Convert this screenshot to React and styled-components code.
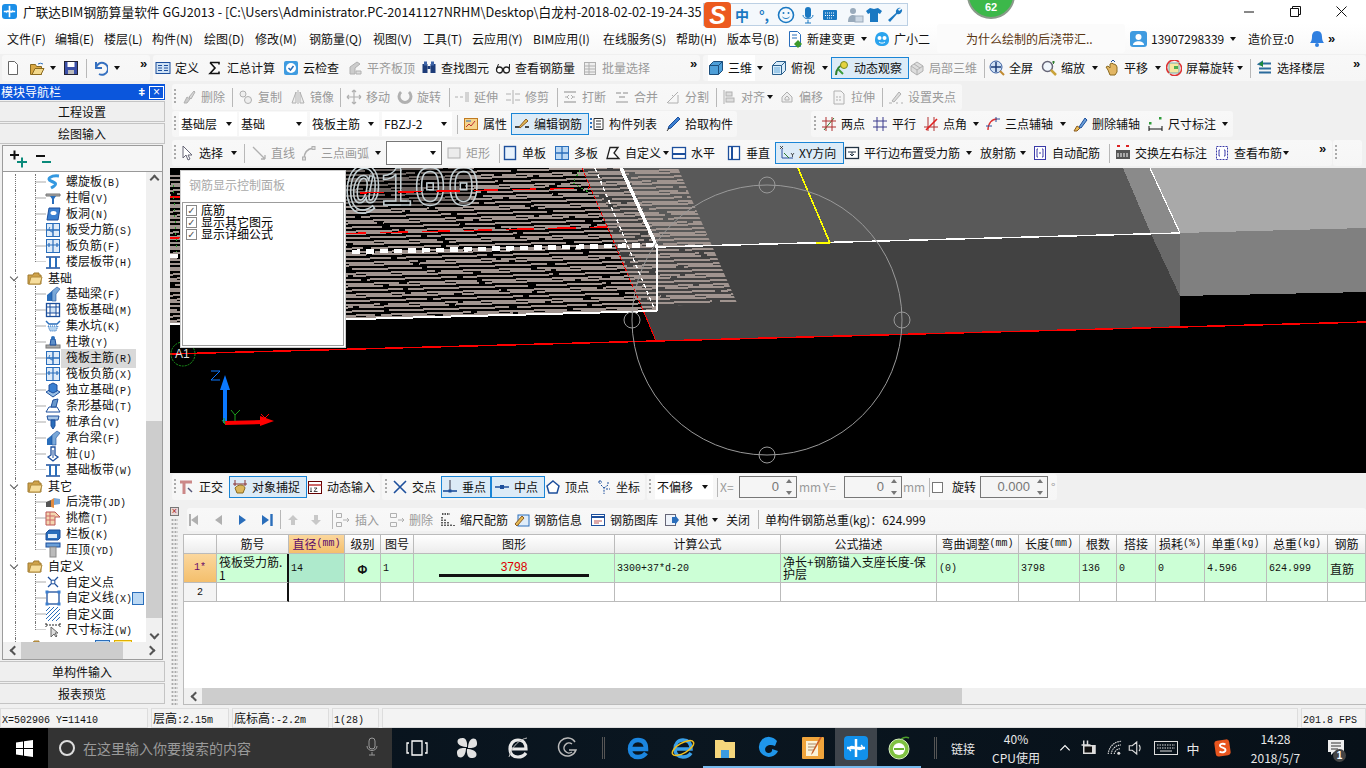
import React from 'react';
import styled, { createGlobalStyle, css } from 'styled-components';

const UI = `"Noto Sans CJK SC","Noto Sans",sans-serif`;
const Global = createGlobalStyle`
  html,body{margin:0;padding:0;width:1366px;height:768px;overflow:hidden;background:#f0f0f0}
  #root{width:1366px;height:768px}
  *{box-sizing:border-box}
`;

/* ---------- icons ---------- */
const B = '#2a6ebb', D = '#1d4f9c', GR = '#b0b0b0';
const tile = (inner) => <><rect x="1.5" y="1.5" width="13" height="13" fill="#dfecf9" stroke={B} />{inner}</>;
const ICONS = {
  new: <path d="M3.5 1.5h6l3 3v10h-9z" fill="#fff" stroke="#666" />,
  open: <><path d="M1.5 4.5h5l1 2h5v8h-11z" fill="#d9a844" stroke="#8a6a20" /><path d="M3 14.5l3-6h9l-3 6z" fill="#f3d98c" stroke="#8a6a20" /><path d="M9 4a4 3 0 0 1 5 0" fill="none" stroke={B} /></>,
  save: <><rect x="1.5" y="1.5" width="13" height="13" fill="#3a4fa8" stroke="#223" /><rect x="4.5" y="2" width="7" height="5" fill="#fff" /><rect x="5" y="10" width="6" height="4" fill="#bbb" /></>,
  undo: <path d="M4 2v6h6M4 8a6 6 0 1 1 3 6" fill="none" stroke="#3570c0" strokeWidth="2" />,
  define: <><rect x="1" y="2.5" width="14" height="11" fill="#cfe2f5" stroke={D} /><path d="M3 5.5h4M3 8h4M3 10.5h4M9 5.5h4M9 8h4M9 10.5h4" stroke={D} /></>,
  sigma: <path d="M3 2.5h9v2M12 13.5H3l5-5.5-5-5.5M3 13.5h9v-2" fill="none" stroke="#111" strokeWidth="1.6" />,
  cloud: <><rect x="1" y="1" width="14" height="14" rx="2" fill="#3e9be0" /><circle cx="8" cy="8" r="5" fill="#fff" /><path d="M5.5 8l2 2 3-4" fill="none" stroke="#2a6ebb" strokeWidth="1.5" /></>,
  flat: <><path d="M3 14V7l7-5 3 2-5 4v6z" fill="#ccc" stroke={GR} /><path d="M9 11h5v3H9z" fill="#ddd" stroke={GR} /></>,
  find: <><rect x="1.5" y="4" width="5" height="9" fill="#1d3c78" /><rect x="9.5" y="4" width="5" height="9" fill="#1d3c78" /><rect x="3" y="1.5" width="3" height="4" fill="#3d64a8" /><rect x="10" y="1.5" width="3" height="4" fill="#3d64a8" /><rect x="6.5" y="6" width="3" height="3" fill="#1d3c78" /></>,
  glasses: <><circle cx="4.5" cy="10" r="3" fill="#fff" stroke="#222" strokeWidth="1.3" /><circle cx="11.5" cy="10" r="3" fill="#fff" stroke="#222" strokeWidth="1.3" /><path d="M7.5 10h1M1.5 9l2-5M14.5 9V4" fill="none" stroke="#222" /></>,
  batch: <><rect x="2.5" y="2.5" width="11" height="12" fill="#eee" stroke={GR} /><path d="M2.5 6h11M2.5 9h11M2.5 12h11M7 2.5v12" stroke={GR} /></>,
  cube: <><path d="M1.5 5.5l4-4h9v9l-4 4h-9z" fill="#4e9fd8" stroke="#1d4f7c" /><path d="M1.5 5.5h9v9M10.5 5.5l4-4" fill="none" stroke="#1d4f7c" /></>,
  top: <><path d="M1.5 5.5l4-4h9v9l-4 4h-9z" fill="#d8ecfa" stroke="#2a5f8c" /><path d="M1.5 5.5h9v9M10.5 5.5l4-4" fill="none" stroke="#2a5f8c" /><rect x="3" y="7" width="6" height="6" fill="#9fcbea" /></>,
  orbit: <><path d="M2 15c0-6 4-10 9-11" fill="none" stroke="#2f7d2f" strokeWidth="2" /><circle cx="10" cy="5" r="3.5" fill="#e5d23f" stroke="#7a8a20" /><path d="M4 9l5 5" stroke="#3a9c3a" strokeWidth="2" /></>,
  local: <><path d="M2 6l6-4 6 4v5l-6 4-6-4z" fill="#ddd" stroke={GR} /><path d="M2 6l6 4 6-4M8 10v5M5 4l6 4" fill="none" stroke={GR} /></>,
  full: <><circle cx="7" cy="7" r="6" fill="#cfe0f4" stroke="#3a5fa0" /><path d="M7 2v10M2 7h10" stroke="#1d3c78" strokeWidth="1.5" /><path d="M11 11l4 4" stroke="#c08a30" strokeWidth="2" /></>,
  zoom: <><circle cx="6.5" cy="6.5" r="5" fill="#f0f6fc" stroke="#667" strokeWidth="1.5" /><path d="M10 10l5 5" stroke="#c9a23a" strokeWidth="2.5" /><path d="M11 2h3M12.5 1v3" stroke="#2f7d2f" /></>,
  pan: <><path d="M4 10l-2-3 2-1 2 2V4l2-1 1 1 1 0 2 1 1 2v5l-2 3H6z" fill="#e2b664" stroke="#8a6a20" /><path d="M9 0l2 2M9 0L7 2" stroke={D} /></>,
  rot: <><rect x="3" y="3" width="10" height="10" fill="#f7e7a0" stroke="#7aa" /><path d="M3 13a7 7 0 0 1 10-11" fill="none" stroke="#d33" strokeWidth="1.6" /><path d="M13 3a7 7 0 0 1-9 11" fill="none" stroke="#d33" strokeWidth="1.6" /><rect x="8" y="6" width="4" height="3" fill="#4caf50" /></>,
  floors: <><path d="M2 4l3-2v3zM5 3.5h9M2 8.5h12M2 12.5h12" stroke="#2a6b9c" strokeWidth="2" fill="#1d8a3a" /><path d="M2 4l4-3v6z" fill="#1d8a3a" /></>,
  del: <><path d="M3 14l3-6 3 2-3 4z" fill="#ccc" stroke={GR} /><path d="M8 8l5-6 1 1-4 7z" fill="#d8d8d8" stroke={GR} /></>,
  copy: <><circle cx="5" cy="5" r="3" fill="#eee" stroke={GR} /><circle cx="10" cy="11" r="3.5" fill="#eee" stroke={GR} /></>,
  mirror: <><path d="M2 14L6 3v11zM14 14L10 3v11z" fill="#eee" stroke={GR} /><path d="M8 1v14" stroke={GR} /></>,
  move: <path d="M8 1v14M1 8h14M8 1L6 3M8 1l2 2M8 15l-2-2M8 15l2-2M1 8l2-2M1 8l2 2M15 8l-2-2M15 8l-2 2" fill="none" stroke={GR} strokeWidth="1.2" />,
  rotate: <path d="M4 3a6 6 0 1 0 8 0" fill="none" stroke={GR} strokeWidth="3" />,
  extend: <path d="M1 8h3M6 8h3M12 3v10M14 3v10" fill="none" stroke={GR} />,
  trim: <path d="M1 5h5M1 11h5M10 5h5M10 11h5M8 1v14" fill="none" stroke={GR} />,
  brk: <><path d="M2 3h12M2 13h12" stroke={GR} strokeWidth="1.4" /><path d="M3 8h3M10 8h3M7 6l-2 2 2 2M9 6l2 2-2 2" fill="none" stroke={GR} /></>,
  merge: <><path d="M2 13h12" stroke={GR} strokeWidth="1.4" /><path d="M2 4h5M9 4h5M5 8h6" fill="none" stroke={GR} strokeWidth="1.4" /></>,
  split: <path d="M2 14l11-11M3 14h10V6M7 6l2 2" fill="none" stroke={GR} />,
  align: <><path d="M3 1v14" stroke={GR} /><rect x="5" y="3" width="6" height="4" fill="#ddd" stroke={GR} /><rect x="5" y="9" width="8" height="4" fill="#ddd" stroke={GR} /></>,
  offset: <path d="M3 13V8l5-5 5 5v5zM6 11V9l2-2 2 2v2z" fill="#eee" stroke={GR} />,
  stretch: <><path d="M3 2h7l3 3v10H3z" fill="#f4f4f4" stroke={GR} /><path d="M5 8h6M5 11h6" stroke={GR} strokeDasharray="2 1" /></>,
  grips: <><path d="M4 12l7-9 2 2-7 8z" fill="#ddd" stroke={GR} /><path d="M1 14h3M8 14h2M13 14h2" stroke={GR} /></>,
  prop: <><rect x="1.5" y="2.5" width="13" height="11" fill="#f6d48c" stroke="#c07a20" /><path d="M3 11l3-3 2 2 4-5" fill="none" stroke="#b33" /><path d="M3 5h5" stroke="#2a6ebb" /></>,
  edit: <><path d="M1 11h5M11 11h4" stroke="#111" strokeWidth="1.4" /><path d="M5 11l7-8 2 2-8 7z" fill="#e7bb55" stroke="#8a5a20" /></>,
  list: <><path d="M5 2.5h9v11H5z" fill="#fff" stroke="#333" /><path d="M7 5h5M7 8h5M7 11h5" stroke="#333" /><path d="M1 3h2M1 7h2M1 11h2" stroke={B} strokeWidth="2" /></>,
  pick: <><path d="M13 1l2 2-9 9-3 1 1-3z" fill="#3a7fd0" stroke={D} /><path d="M2 15l2-3" stroke="#333" /></>,
  twopt: <><path d="M3 14L13 2" stroke="#2f7d2f" /><path d="M1 5h14M1 11h14" stroke="#b03030" /><path d="M5 1v14M11 1v14" stroke="#b03030" /></>,
  par: <path d="M1 5h14M1 11h14M5 1v14M11 1v14" stroke="#3a3a8c" />,
  angle: <><path d="M1 11h14M5 1v14M11 1v14" stroke="#b03030" /><path d="M3 14L14 3" stroke="#e02020" strokeWidth="1.6" /></>,
  arc3: <><path d="M3 14c0-7 4-11 9-11" fill="none" stroke="#d33" strokeWidth="1.4" /><path d="M1 10h6M11 1v5M12 3h3" stroke="#2a4f9c" /></>,
  delax: <><path d="M2 15l3-5 3 2-3 3z" fill="#e7bb55" stroke="#8a5a20" /><path d="M7 11l6-9 2 2-6 8z" fill="#6a9fd8" stroke={D} /></>,
  dim: <><path d="M1 10v5M14 10v5M1 13h13" stroke="#111" /><rect x="1" y="6" width="2.5" height="2.5" fill="#2f9c3a" /><rect x="11" y="1" width="2.5" height="2.5" fill="#2f9c3a" /></>,
  select: <path d="M4 1v12l3-3 2 5 2-1-2-4h4z" fill="#fff" stroke="#667" />,
  line: <path d="M2 2l12 12M14 14v-4M14 14h-4" fill="none" stroke={GR} strokeWidth="1.3" />,
  arc: <><path d="M3 14c0-6 3-10 9-11" fill="none" stroke={GR} strokeWidth="1.6" /><rect x="1.5" y="12" width="3" height="3" fill="#ddd" stroke={GR} /><rect x="11" y="1.5" width="3" height="3" fill="#ddd" stroke={GR} /></>,
  rect: <rect x="2" y="3" width="12" height="10" fill="#ececec" stroke={GR} />,
  single: <rect x="2.5" y="1.5" width="11" height="13" fill="#e8f2fc" stroke={D} strokeWidth="1.4" />,
  multi: <><rect x="1.5" y="1.5" width="13" height="13" fill="#bcd9f4" stroke={B} /><path d="M8 1.5v13M1.5 8h13" stroke={B} strokeWidth="1.3" /></>,
  custom: <path d="M5 2.5h8L9 8l5 5.5H2z" fill="#fff" stroke="#222" strokeWidth="1.3" />,
  horiz: <><rect x="1.5" y="2.5" width="13" height="11" fill="#fff" stroke={D} strokeWidth="1.3" /><path d="M1.5 9h13" stroke={D} strokeWidth="2" /></>,
  vert: <><rect x="2.5" y="1.5" width="11" height="13" fill="#fff" stroke={D} strokeWidth="1.3" /><path d="M6 1.5v13" stroke={D} strokeWidth="2" /></>,
  xy: <><path d="M3 4v9h11" fill="none" stroke="#2a4f9c" /><path d="M5 8l5 5" stroke="#2f7d2f" /><path d="M1 1l3 3M4 1L1 4M12 8l1.500 2 1.500-2M13.500 10v2" fill="none" stroke="#111" strokeWidth=".7" /></>,
  parEdge: <><rect x="1.5" y="2.5" width="13" height="11" fill="#fff" stroke="#234" strokeWidth="1.3" /><path d="M4 7h8M8 7v4M6 9l2 2 2-2" fill="none" stroke="#234" /></>,
  auto: <><rect x="2.5" y="1.5" width="11" height="13" fill="#fff" stroke="#3a3aa8" /><path d="M6 4H5v8h1M10 4h1v8h-1M7 8h2" fill="none" stroke="#3a3aa8" /></>,
  swap: <><path d="M1 5h14v9H1z" fill="#555" /><path d="M3 8v4M6 8v4M9 8v4M12 8v4" stroke="#fff" /><path d="M2 1h3M11 1h3" stroke="#d22" strokeWidth="2" /></>,
  viewb: <><rect x="2.5" y="1.5" width="11" height="13" fill="#fff" stroke="#3a3aa8" strokeDasharray="2 1" /><path d="M6 5H5v6h1M10 5h1v6h-1" fill="none" stroke="#3a3aa8" /></>,
  ortho: <><path d="M1 3h12M5 3v12" stroke="#c88" strokeWidth="3" /><path d="M9 9l4 4" stroke="#557" strokeWidth="1.5" /></>,
  snap: <><path d="M3 1v6M13 1v6M1 5h14" stroke="#833" /><path d="M3 9c3-4 9-4 10 0l-2 5H5z" fill="#dcb75c" stroke="#8a6a20" /></>,
  dyn: <><rect x="1.5" y="2.5" width="13" height="12" fill="#fff" stroke="#600" /><path d="M1.5 6h13" stroke="#b33" strokeWidth="1.5" /><path d="M4 8.500v4M3 12.500h2M7 9h3l-3 3.500h3.500" fill="none" stroke="#222" strokeWidth=".8" /></>,
  cross: <path d="M2 2l12 12M14 2L2 14" stroke="#1d4f9c" strokeWidth="1.6" />,
  perp: <><path d="M1 12h14" stroke={D} strokeWidth="1.6" /><path d="M8 1v11" stroke="#334" /><rect x="6.5" y="10.5" width="3" height="3" fill={D} /></>,
  mid: <><path d="M1 8h14" stroke={D} strokeWidth="1.5" /><rect x="6" y="6" width="4" height="4" fill={D} /></>,
  vertex: <path d="M8 2l6 5-2 7H4L2 7z" fill="#fff" stroke={D} strokeWidth="1.5" />,
  coord: <path d="M4 1v4M2 3h4M12 3v3M10 10h4M5 6l3 3v6M8 9l4-3" fill="none" stroke={D} strokeDasharray="2 1" />,
  first: <><path d="M5 3l7 5-7 5z" transform="rotate(180 8 8)" fill={GR} /><path d="M3 2v12" stroke={GR} strokeWidth="2" /></>,
  prev: <path d="M11 3L4 8l7 5z" fill={GR} />,
  next: <path d="M5 3l7 5-7 5z" fill={B} />,
  last: <><path d="M3 3l7 5-7 5z" fill={B} /><path d="M12.5 2v12" stroke={B} strokeWidth="2.4" /></>,
  up: <path d="M8 3l5 5h-3v5H6V8H3z" fill="#c8c8c8" />,
  down: <path d="M8 13l5-5h-3V3H6v5H3z" fill="#c8c8c8" />,
  ins: <path d="M1.5 1.5h5v4h-5zM1.5 10.5h5v4h-5zM8 8h6M12 6l2 2-2 2" fill="none" stroke={GR} />,
  rem: <path d="M1.5 1.5h6v4h-6zM1.5 10.5h6v4h-6zM9 8h6M13 6l2 2-2 2" fill="none" stroke={GR} />,
  scale: <path d="M2 14V4M5 14V7M8 14v-4M11 14v-2M14 14v-1M2 2h8" stroke="#222" fill="none" strokeDasharray="1.5 1" strokeWidth="1.4" />,
  info: <><rect x="4" y="3" width="11" height="11" fill="#dfecf9" stroke={B} /><path d="M1 12L8 4l2 2-7 8z" fill="#e7bb55" stroke="#8a5a20" /></>,
  lib: <><rect x="1.5" y="2.5" width="13" height="11" fill="#fff" stroke={D} /><path d="M1.5 5h13" stroke={D} strokeWidth="2" /><path d="M4 9h8M4 11h5" stroke="#b55" /></>,
  other: <><rect x="1.5" y="2.5" width="10" height="11" fill="#eef3fa" stroke="#667" /><path d="M8 5h3V3l4 5-4 5v-2H8z" fill={B} /></>,
  spiral: <path d="M14 2C6 1 1 5 6 7c5 2 7 3 0 7" fill="none" stroke="#3498e0" strokeWidth="3" />,
  cap: <><path d="M1 4h14v2H1z" fill="#aaa" stroke="#777" /><path d="M5 6h6l-2 3v5H7V9z" fill={B} /></>,
  hole: <><path d="M4 2h11l-2 12H2z" fill="#3a7fd0" stroke={D} /><ellipse cx="8.5" cy="7" rx="3" ry="2" fill="#fff" /></>,
  pbar: tile(<><path d="M8 2v12M2 8h12" stroke={B} strokeWidth="1.4" /><path d="M5 5c-2 2 0 5 3 5" fill="none" stroke={B} /></>),
  pneg: tile(<path d="M8 2v12M2 7h12M4 5v4M12 5v4" fill="none" stroke={B} strokeWidth="1.2" />),
  band: <><path d="M1 3h14M1 14h14" stroke={D} strokeWidth="1.4" /><path d="M5 3v11M11 3v11" stroke={B} strokeWidth="2" /></>,
  beam: <><path d="M2 15V9l5-4v10z" fill="#2a6ebb" /><path d="M7 5l5-4 3 2-4 5v7H7z" fill="#7aa8d8" stroke={D} strokeWidth=".6" /></>,
  raft: <><rect x="1.5" y="1.5" width="13" height="13" fill="#fff" stroke={D} strokeWidth="1.3" /><rect x="5" y="5" width="6" height="6" fill="#cfe2f5" stroke={D} /><path d="M1.5 5H5M11 5h3.500M1.500 11H5M11 11h3.500M5 1.500V5M11 1.500V5M5 11v3.500M11 11v3.500" stroke={D} /></>,
  sump: <><path d="M1 3l3 3h8l3-3" fill="none" stroke={B} strokeWidth="1.4" /><path d="M3 8h10l-2 5H5z" fill="#b4d3f0" stroke={B} strokeDasharray="1 1" /></>,
  pier: <><rect x="1" y="11" width="14" height="3" fill="#aaa" stroke="#777" /><path d="M6 5h4l1 6H5z" fill="#5f8fc8" stroke={D} /><circle cx="8" cy="4" r="2" fill={B} /></>,
  iso: <><path d="M1 10l7-4 7 4-7 5z" fill="#9cc1e6" stroke={D} /><path d="M4 9V3l4-2 4 2v6l-4 2z" fill="#3a7fd0" stroke={D} /></>,
  strip: <><path d="M1 14l3-5h8l3 5z" fill="#fff" stroke={D} /><path d="M6 9l2-7 5-1-2 8z" fill="#6a98cc" stroke={D} /></>,
  ptop: <><path d="M2 2h12l-1 4H3z" fill="#aac8e8" stroke={D} /><path d="M6 6h4v6l-2 3-2-3z" fill={B} stroke={D} /></>,
  pile: <><path d="M6 1h4v8l3 2-5 4-5-4 3-2z" fill="#fff" stroke={D} strokeWidth="1.3" /><path d="M8 4v8" stroke={D} /></>,
  post: <><path d="M1 8l5-2v7H1z" fill="#555" /><path d="M6 6l3-2v10l-3-1z" fill="#e08a40" /><path d="M9 4l6 1v5l-6 1z" fill="#7aa8d8" /></>,
  eave: <><path d="M1 2h9l5 5H10v8H1z" fill="#f3d6b0" stroke="#b55" /><path d="M1 6h9M1 10h9M5 2v13" stroke="#c66" /></>,
  rail: <><path d="M1 7l3-3h11v8l-2 2H1z" fill={B} stroke={D} /><path d="M3 8h9v4H3z" fill="#dfecf9" /></>,
  coping: <><rect x="1" y="1" width="14" height="4" fill="#6a9fd8" stroke={D} /><rect x="5" y="5" width="6" height="10" fill="#bbb" stroke="#888" /></>,
  cpoint: <><path d="M3 3l10 10M13 3L3 13" stroke={D} strokeWidth="1.3" /><circle cx="8" cy="8" r="2" fill="#fff" stroke={D} /></>,
  cline: <><rect x="2" y="2" width="12" height="12" fill="#fff" stroke={D} strokeWidth="1.3" /><path d="M.5 .5h3v3h-3zM12.500 .500h3v3h-3zM.500 12.500h3v3h-3zM12.500 12.500h3v3h-3z" fill="#3a7fd0" /></>,
  cface: <path d="M1 5l4-4M1 9l8-8M1 13L13 1M3 15L15 3M7 15l8-8M11 15l4-4" stroke={B} />,
  cdim: <><path d="M1 1v4M15 1v4M1 3h14" stroke="#222" strokeDasharray="2 1" /><path d="M6 5v10l3-3 2 3 1-1-2-3h3z" fill="#ddd" stroke="#666" /></>,
  folder: <><path d="M1 5h5l1-2h5v2h2v9H1z" fill="#cfa24a" stroke="#a07a30" /><path d="M2 14l2-7h11l-2 7z" fill="#f6dd9c" stroke="#b08a3a" /></>,
};
const Svg = styled.svg`flex:none;display:block;`;
const Ic = ({ n, s = 16 }) => <Svg width={s} height={s} viewBox="0 0 16 16" shapeRendering="geometricPrecision">{ICONS[n]}</Svg>;

/* ---------- mixed text: CJK 12px, latin monospace 10px ---------- */
const Lat = styled.span`font-family:"Liberation Mono",monospace;font-size:10px;`;
const Mix = ({ t }) => <>{t.split(/([\x20-\x7e]+)/).map((s, i) => (i % 2 ? <Lat key={i}>{s}</Lat> : s))}</>;

/* ---------- page ---------- */
const Page = styled.div`width:1366px;height:768px;display:flex;flex-direction:column;background:#f0f0f0;font:12px/16px ${UI};color:#111;position:relative;overflow:hidden;`;

const TitleBar = styled.div`height:23px;flex:none;display:flex;align-items:center;background:#fff;position:relative;`;
const AppLogo = styled.div`width:15px;height:15px;margin:0 6px 0 2px;background:#1b8fe8;border-radius:3px;display:flex;align-items:center;justify-content:center;flex:none;`;
const TitleText = styled.div`flex:none;width:680px;font-size:12.7px;line-height:23px;white-space:nowrap;overflow:hidden;color:#111;`;
const WinBtns = styled.div`margin-left:auto;display:flex;padding-right:2px;`;
const WinBtn = styled.div`width:46px;height:22px;display:flex;align-items:center;justify-content:center;`;

const Sogou = styled.div`position:absolute;left:703px;top:3px;width:205px;height:23px;background:#f4f8fc;border:1px solid #bcd0e4;display:flex;align-items:center;z-index:3;`;
const SogouS = styled.div`position:absolute;left:0;top:-2px;width:27px;height:26px;border-radius:4px;background:#ec5a1e;color:#fff;font:italic bold 25px/26px "Liberation Sans",sans-serif;text-align:center;`;
const SogouItem = styled.div`position:absolute;top:2px;left:${p => p.$x}px;width:18px;height:18px;color:#1a78c2;font:bold 14px/18px ${UI};text-align:center;`;
const Badge = styled.div`position:absolute;left:967px;top:-29px;width:48px;height:48px;border-radius:50%;background:#3cb84a;border:2px solid #8a9a8a;color:#fff;font:bold 11px/14px "Liberation Sans",sans-serif;display:flex;align-items:flex-end;justify-content:center;padding-bottom:3px;z-index:3;`;

const MenuBar = styled.div`height:31px;flex:none;display:flex;align-items:center;background:linear-gradient(#fff,#f8f8f8);`;
const MenuItem = styled.div`flex:none;width:${p => p.$w}px;padding-left:${p => p.$pl || 0}px;display:flex;align-items:center;gap:4px;white-space:nowrap;font-size:12px;`;
const MenuAsk = styled.div`flex:none;width:188px;height:29px;background:#fbfbfb;color:#5a3510;line-height:29px;padding-left:29px;margin-right:5px;border-radius:3px;`;
const Bell = styled.div`width:14px;height:18px;`;

const ToolRow = styled.div`display:flex;height:${p => p.$h || 26}px;margin-top:${p => p.$mt || 0}px;flex:none;`;
const Group = styled.div`
  display:flex;align-items:center;flex:none;height:100%;border-radius:3px;
  width:${p => p.$w}px;margin-left:${p => p.$ml}px;padding-left:${p => p.$pl}px;
  background:linear-gradient(#f8f8f8,#f6f6f6);
`;
const Tool = styled.div`
  display:flex;align-items:center;flex:none;height:22px;white-space:nowrap;gap:4px;
  width:${p => p.$w}px;padding-left:${p => p.$pl}px;
  color:${p => (p.$off ? '#9a9a9a' : '#111')};
  ${p => p.$white && css`background:#fff;height:100%;`}
  ${p => p.$active && css`background:#dcebf7;border:1px solid #1a85d6;padding-left:${p.$pl - 1}px;`}
`;
const Slot = styled.div`flex:none;width:${p => p.$w}px;height:100%;display:flex;align-items:center;white-space:nowrap;`;
const Caret = styled.i`display:block;width:0;height:0;border:3px solid transparent;border-top:4px solid #111;border-bottom:0;margin-left:2px;`;
const Sep = styled.i`display:block;width:1px;height:19px;background:#b8b8b8;margin-left:2px;`;
const Grip = styled.i`display:block;width:2px;height:16px;margin-left:1px;background:repeating-linear-gradient(#aaa 0 2px,transparent 2px 4px);`;
const Chev = styled.span`font:bold 13px/10px "Liberation Sans",sans-serif;color:#111;align-self:flex-start;margin-top:4px;`;
const SelectBox = styled.div`
  flex:none;width:${p => p.$w}px;height:${p => p.$h || 24}px;position:relative;display:flex;align-items:center;padding-left:2px;white-space:nowrap;
  background:#fff;${p => p.$border && 'border:1px solid #777;'}
  & > i{position:absolute;right:5px;top:50%;margin-top:-2px;}
`;
const SpinBox = styled.div`
  flex:none;width:${p => p.$w}px;height:22px;position:relative;border:1px solid #777;background:#f5f5f5;color:#777;
  text-align:right;line-height:20px;padding-right:17px;font-family:"Liberation Sans",sans-serif;font-size:13px;
`;
const SpinArrows = styled.div`position:absolute;right:3px;top:2px;width:9px;height:16px;display:flex;flex-direction:column;justify-content:space-between;align-items:center;
  &::before{content:"";border:3px solid transparent;border-bottom:4px solid #777;border-top:0;}
  &::after{content:"";border:3px solid transparent;border-top:4px solid #777;border-bottom:0;}
`;
const Box = styled.i`display:block;width:11px;height:11px;border:1px solid #777;background:#fff;`;

const T = (cx, icon, label, o = {}) => ({ k: 't', left: o.box ?? cx - 8, pl: o.box != null ? cx - 8 - o.box : 0, icon, label, ...o });
const L = (x, label, o = {}) => ({ k: 't', left: x, pl: 0, label, ...o });
const C = (x, o = {}) => ({ k: 'c', left: x - 5, ...o });
const S = (x) => ({ k: 's', left: x - 2 });
const G = (x) => ({ k: 'g', left: x - 2 });
const V = (x) => ({ k: 'v', left: x - 4 });
const Sel = (x, w, label, o = {}) => ({ k: 'sel', left: x, bw: w, label, ...o });
const Sp = (x, w, val) => ({ k: 'sp', left: x, bw: w, val });
const Cb = (x) => ({ k: 'cb', left: x });

const renderItem = (it, w, i) => {
  switch (it.k) {
    case 't':
      return <Tool key={i} $w={w} $pl={it.pl} $off={it.off} $active={it.active} $white={it.white}>
        {it.icon && <Ic n={it.icon} />}{it.label && <span>{it.label}</span>}
      </Tool>;
    case 'c': return <Slot key={i} $w={w}><Caret /></Slot>;
    case 's': return <Slot key={i} $w={w}><Sep /></Slot>;
    case 'g': return <Slot key={i} $w={w}><Grip /></Slot>;
    case 'v': return <Slot key={i} $w={w}><Chev>»</Chev></Slot>;
    case 'sel': return <Slot key={i} $w={w}><SelectBox $w={it.bw} $border={it.border}>{it.label}<Caret /></SelectBox></Slot>;
    case 'sp': return <Slot key={i} $w={w}><SpinBox $w={it.bw}>{it.val}<SpinArrows /></SpinBox></Slot>;
    case 'cb': return <Slot key={i} $w={w}><Box /></Slot>;
    default: return null;
  }
};

const Bar = ({ groups, h, mt, origin }) => {
  let prev = origin;
  return <ToolRow $h={h} $mt={mt}>
    {groups.map((g, gi) => {
      const ml = g.from - prev; prev = g.to;
      return <Group key={gi} $w={g.to - g.from} $ml={ml} $pl={g.items[0].left - g.from}>
        {g.items.map((it, i) => renderItem(it, (i + 1 < g.items.length ? g.items[i + 1].left : g.to) - it.left, i))}
      </Group>;
    })}
  </ToolRow>;
};

const row1 = [
  { from: 2, to: 150, items: [T(13, 'new'), T(37, 'open'), C(53), T(71, 'save'), S(86), T(100, 'undo'), C(117), V(144)] },
  { from: 153, to: 700, items: [T(163, 'define', '定义'), T(215, 'sigma', '汇总计算'), T(291, 'cloud', '云检查'), T(355, 'flat', '平齐板顶', { off: 1 }), T(429, 'find', '查找图元'), T(503, 'glasses', '查看钢筋量'), T(590, 'batch', '批量选择', { off: 1 }), V(694)] },
  { from: 703, to: 1366, items: [T(716, 'cube', '三维', { white: 1 }), C(760), T(779, 'top', '俯视'), C(825), T(842, 'orbit', '动态观察', { box: 831, active: 1 }), T(917, 'local', '局部三维', { off: 1 }), S(984), T(997, 'full', '全屏'), T(1049, 'zoom', '缩放'), C(1095), T(1112, 'pan', '平移'), C(1158), T(1174, 'rot', '屏幕旋转'), C(1240), S(1250), T(1265, 'floors', '选择楼层'), V(1357)] },
];
const row2 = [{ from: 172, to: 962, items: [G(175), T(189, 'del', '删除', { off: 1 }), S(232), T(246, 'copy', '复制', { off: 1 }), T(298, 'mirror', '镜像', { off: 1 }), S(340), T(354, 'move', '移动', { off: 1 }), T(405, 'rotate', '旋转', { off: 1 }), S(449), T(462, 'extend', '延伸', { off: 1 }), T(513, 'trim', '修剪', { off: 1 }), S(557), T(570, 'brk', '打断', { off: 1 }), T(622, 'merge', '合并', { off: 1 }), T(673, 'split', '分割', { off: 1 }), S(716), T(729, 'align', '对齐', { off: 1 }), C(770), T(787, 'offset', '偏移', { off: 1 }), T(839, 'stretch', '拉伸', { off: 1 }), S(882), T(896, 'grips', '设置夹点', { off: 1 })] }];
const row3 = [
  { from: 172, to: 737, items: [G(175), Sel(179, 58, '基础层'), Sel(239, 68, '基础'), Sel(310, 69, '筏板主筋'), Sel(382, 70, 'FBZJ-2'), S(457), T(471, 'prop', '属性'), T(522, 'edit', '编辑钢筋', { box: 511, active: 1 }), T(597, 'list', '构件列表'), T(673, 'pick', '拾取构件')] },
  { from: 811, to: 1233, items: [G(815), T(829, 'twopt', '两点'), T(880, 'par', '平行'), T(931, 'angle', '点角'), C(976), T(993, 'arc3', '三点辅轴'), C(1063), T(1080, 'delax', '删除辅轴'), T(1156, 'dim', '尺寸标注'), C(1225)] },
];
const row4 = [
  { from: 172, to: 1332, items: [G(175), T(187, 'select', '选择'), C(234), S(244), T(259, 'line', '直线', { off: 1 }), T(309, 'arc', '三点画弧', { off: 1 }), C(378), Sel(386, 56, '', { border: 1 }), T(454, 'rect', '矩形', { off: 1 }), S(499), T(510, 'single', '单板'), T(562, 'multi', '多板'), T(613, 'custom', '自定义'), C(666), T(679, 'horiz', '水平'), T(734, 'vert', '垂直'), T(787, 'xy', 'XY方向', { box: 775, active: 1 }), T(852, 'parEdge', '平行边布置受力筋'), C(969), L(980, '放射筋'), C(1023), T(1040, 'auto', '自动配筋'), S(1109), T(1123, 'swap', '交换左右标注'), T(1222, 'viewb', '查看布筋'), C(1286), V(1323)] },
  { from: 1333, to: 1362, items: [G(1336)] },
];
const row5 = [
  { from: 172, to: 380, items: [G(175), T(187, 'ortho', '正交'), T(240, 'snap', '对象捕捉', { box: 229, active: 1 }), T(315, 'dyn', '动态输入')] },
  { from: 382, to: 645, items: [G(386), T(400, 'cross', '交点'), T(450, 'perp', '垂点', { box: 441, active: 1 }), T(502, 'mid', '中点', { box: 491, active: 1 }), T(553, 'vertex', '顶点'), T(604, 'coord', '坐标')] },
  { from: 647, to: 1057, items: [G(650), Sel(655, 58, '不偏移'), S(717), L(720, 'X=', { off: 1 }), Sp(739, 58, '0'), L(799, 'mm', { off: 1 }), L(823, 'Y=', { off: 1 }), Sp(844, 58, '0'), L(903, 'mm', { off: 1 }), S(929), Cb(932), L(952, '旋转'), Sp(980, 68, '0.000'), L(1051, '°', { off: 1 })] },
];
const rowT = [{ from: 187, to: 1366, items: [T(194, 'first'), T(218, 'prev'), T(241, 'next'), T(266, 'last'), S(279), T(292, 'up'), T(315, 'down'), S(331), T(342, 'ins', '插入', { off: 1 }), T(396, 'rem', '删除', { off: 1 }), T(447, 'scale', '缩尺配筋'), T(521, 'info', '钢筋信息'), T(597, 'lib', '钢筋图库'), T(671, 'other', '其他'), C(714), L(725, '关闭'), S(757), L(764, '单构件钢筋总重(kg)：624.999')] }];

const menu = [['文件(F)', 55, 7], ['编辑(E)', 49], ['楼层(L)', 48], ['构件(N)', 52], ['绘图(D)', 51], ['修改(M)', 54], ['钢筋量(Q)', 64], ['视图(V)', 50], ['工具(T)', 49], ['云应用(Y)', 61], ['BIM应用(I)', 70], ['在线服务(S)', 73], ['帮助(H)', 51], ['版本号(B)', 60]];

/* ---------- left panel ---------- */
const Main = styled.div`display:flex;margin-top:3px;flex:none;height:621px;`;
const Left = styled.div`width:165px;flex:none;display:flex;flex-direction:column;`;
const NavHead = styled.div`height:16px;flex:none;background:#0b56dc;color:#fff;display:flex;align-items:center;padding-left:1px;font-size:12px;line-height:16px;position:relative;`;
const NavClose = styled.div`margin-left:4px;margin-right:1px;width:15px;height:13px;border:1px solid #fff;font:12px/11px "Liberation Sans",sans-serif;text-align:center;`;
const Pin = styled.div`font:bold 11px/12px "Liberation Sans",sans-serif;margin-left:auto;`;
const NavBtn = styled.div`flex:none;height:21px;margin-top:${p => p.$mt ?? 1}px;background:#efefef;border:1px solid #c4c4c4;border-width:1px 1px 1px 0;text-align:center;line-height:20px;color:#111;`;
const TreeBox = styled.div`flex:none;height:515px;margin:1px 2px 0 2px;border:1px solid #9c9c9c;display:flex;flex-direction:column;background:#f0f0f0;`;
const Expander = styled.div`height:26px;flex:none;display:flex;align-items:center;gap:7px;padding-left:6px;background:#f6f6f6;border-bottom:1px solid #999;`;
const TreeWrap = styled.div`flex:1;min-height:0;display:flex;`;
const TreeBody = styled.div`width:143px;flex:none;overflow:hidden;background:#fff;padding-top:2px;`;
const VScroll = styled.div`width:16px;flex:none;background:#f0f0f0;display:flex;flex-direction:column;align-items:center;justify-content:space-between;padding:4px 0;position:relative;`;
const VThumb = styled.div`position:absolute;left:0;right:0;top:249px;bottom:24px;background:#cdcdcd;`;
const Arrow = styled.i`display:block;width:7px;height:7px;border:solid #555;border-width:2px 0 0 2px;transform:rotate(${p => p.$r}deg);`;
const HScroll = styled.div`height:${p => p.$h || 17}px;flex:none;background:#f0f0f0;display:flex;align-items:center;position:relative;padding:0 8px;`;
const HThumb = styled.div`position:absolute;top:0;bottom:0;left:${p => p.$l}px;width:${p => p.$w}px;background:#cdcdcd;`;
const ArrowEnd = styled(Arrow)`margin-left:auto;`;
const TreeLine = styled.div`
  height:16px;display:flex;align-items:center;position:relative;white-space:nowrap;padding-left:${p => (p.$folder ? 8 : 42)}px;
  &::before{content:"";position:absolute;left:12px;top:0;bottom:0;border-left:1px dotted #777;}
  ${p => !p.$folder && css`
    &::after{content:"";position:absolute;left:32px;top:0;height:${p.$last ? '8px' : '16px'};width:10px;border-left:1px dotted #777;background:radial-gradient(circle,#777 .5px,transparent .8px) 0 7px/2px 2px repeat-x;}
  `}
`;
const Fold = styled.i`position:relative;z-index:1;display:block;width:6px;height:6px;border:solid #555;border-width:0 1.6px 1.6px 0;transform:rotate(45deg);margin:-3px 10px 0 0;background:#fff;`;
const TreeLabel = styled.span`margin-left:5px;background:${p => (p.$sel ? '#d9d9d9' : 'transparent')};line-height:16px;${p => p.$sel && 'width:75px;margin-left:0;padding-left:5px;'}`;
const MiniTile = styled.div`width:${p => p.$w || 12}px;height:13px;flex:none;margin-left:${p => p.$ml || 0}px;background:${p => p.$bg || '#bcd9f4'};border:1px solid ${p => p.$line || B};`;

const tree = [
  ['spiral', '螺旋板(B)'], ['cap', '柱帽(V)'], ['hole', '板洞(N)'], ['pbar', '板受力筋(S)'], ['pneg', '板负筋(F)'], ['band', '楼层板带(H)', 'last'],
  ['folder', '基础', 'f'],
  ['beam', '基础梁(F)'], ['raft', '筏板基础(M)'], ['sump', '集水坑(K)'], ['pier', '柱墩(Y)'], ['pbar', '筏板主筋(R)', 'sel'], ['pneg', '筏板负筋(X)'], ['iso', '独立基础(P)'], ['strip', '条形基础(T)'], ['ptop', '桩承台(V)'], ['beam', '承台梁(F)'], ['pile', '桩(U)'], ['band', '基础板带(W)', 'last'],
  ['folder', '其它', 'f'],
  ['post', '后浇带(JD)'], ['eave', '挑檐(T)'], ['rail', '栏板(K)'], ['coping', '压顶(YD)', 'last'],
  ['folder', '自定义', 'f'],
  ['cpoint', '自定义点'], ['cline', '自定义线(X)', 'tile'], ['cface', '自定义面'], ['cdim', '尺寸标注(W)', 'last'],
];

/* ---------- right ---------- */
const Right = styled.div`margin-left:5px;flex:1;min-width:0;display:flex;flex-direction:column;`;
const Canvas = styled.div`flex:none;height:305px;margin-top:2px;background:#000;position:relative;overflow:hidden;`;
const CanvasSvg = styled.svg`display:block;width:1196px;height:305px;`;
const Ctl = styled.div`position:absolute;left:10px;top:2px;width:166px;height:178px;background:#fff;border:1px solid #cfcfcf;z-index:2;display:flex;flex-direction:column;padding:0 1px 1px 1px;`;
const CtlTitle = styled.div`height:31px;flex:none;color:#aaa;line-height:28px;padding-left:7px;`;
const CtlList = styled.div`flex:1;border:1px solid #9c9c9c;padding:1px 3px;`;
const CtlRow = styled.div`height:12px;display:flex;align-items:center;gap:4px;line-height:12px;white-space:nowrap;color:#000;`;
const CtlCheck = styled.div`width:11px;height:11px;border:1px solid #888;flex:none;background:#fff;color:#555;font:bold 10px/9px "DejaVu Sans",sans-serif;text-align:center;`;

const Lower = styled.div`flex:1;min-height:0;display:flex;`;
const Splitter = styled.div`width:13px;flex:none;position:relative;padding-top:7px;`;
const SplitIcon = styled.div`width:9px;height:9px;border:1px solid #777;background:#e8d8d8;color:#a22;font:9px/7px "Liberation Sans",sans-serif;text-align:center;margin-left:0;`;
const Dots = styled.div`width:7px;height:187px;margin:2px 0 0 1px;background:radial-gradient(circle,#aaa 1px,transparent 1.2px) 0 0/3px 4px;`;
const TablePane = styled.div`flex:1;min-width:0;display:flex;flex-direction:column;`;
const Frame = styled.div`flex:1;min-height:0;margin-top:3px;border:1px solid #bbb;border-right:0;background:#fff;display:flex;flex-direction:column;justify-content:space-between;`;
const Grid = styled.div`display:grid;grid-template-columns:33px 72px 56px 36px 33px 201px 166px 156px 82px 61px 37px 39px 49px 62px 61px 38px;grid-template-rows:19px 29px 19px;`;
const Cell = styled.div`
  border-right:1px solid #bbb;border-bottom:1px solid #bbb;overflow:hidden;white-space:nowrap;min-width:0;
  display:flex;align-items:center;padding-left:2px;line-height:11px;position:relative;
  background:${p => p.$bg || '#fff'};
  ${p => p.$head && css`justify-content:center;padding:0;background:${p.$bg || 'linear-gradient(#fff,#ececec)'};line-height:16px;`}
  ${p => p.$center && 'justify-content:center;padding:0;'}
  ${p => p.$wrap && `white-space:normal;line-height:${p.$wrap}px;align-items:center;`}
  ${p => p.$mark && 'border-right:2px solid #111;'}
  ${p => p.$color && `color:${p.$color};`}
`;
const Shape = styled.div`width:150px;text-align:center;color:#d00;font:12px/12px "Liberation Sans",sans-serif;border-bottom:3px solid #111;padding-bottom:0;height:16px;margin-top:1px;`;

/* ---------- status / task ---------- */
const Status = styled.div`flex:none;height:20px;margin-top:3px;display:flex;gap:3px;`;
const StatusCell = styled.div`flex:none;width:${p => p.$w}px;background:#f3f3f3;border:1px solid #ddd;padding-left:1px;line-height:18px;white-space:nowrap;`;
const Task = styled.div`flex:1;display:flex;background:linear-gradient(90deg,#07111b,#0a1620 50%,#071018);color:#e8e8e8;align-items:stretch;`;
const Start = styled.div`width:48px;flex:none;background:#000;display:flex;align-items:center;justify-content:center;`;
const Search = styled.div`width:344px;flex:none;background:#333;display:flex;align-items:center;padding-left:11px;gap:8px;color:#9a9a9a;font-size:14px;`;
const Ring = styled.div`width:16px;height:16px;border-radius:50%;border:2px solid #ddd;flex:none;`;
const MicWrap = styled.div`margin-left:auto;margin-right:14px;`;
const Slot2 = styled.div`width:${p => p.$w}px;flex:none;display:flex;align-items:center;justify-content:center;position:relative;${p => p.$on && 'background:#3e444b;'}${p => p.$run && 'box-shadow:inset 0 -2px #76b9ed;'}`;
const SepV = styled.div`width:3px;height:22px;border-left:1px solid #555;border-right:1px solid #555;`;
const Tray = styled.div`text-align:center;font-size:${p => p.$s || 12}px;line-height:19px;white-space:nowrap;`;
const NotifBadge = styled.div`position:absolute;left:27px;top:21px;width:13px;height:13px;border-radius:50%;background:#444;color:#fff;font:bold 10px/13px "Liberation Sans",sans-serif;text-align:center;`;

const TB = ({ children, s = 24 }) => <svg width={s} height={s} viewBox="0 0 24 24">{children}</svg>;
const petal = 'M12 11C8 11 2.500 9.500 2.500 5.500 2.500 2.500 5.500 2 8 2 11 2 12.500 6 12 11z';
const letterE = 'M4 13h16c0-6-3-9-8-9s-8 4-8 9 3 8 8 8c4 0 6-1 8-4';

const hatchRows = Array.from({ length: 52 }, (_, i) => 168 + i * 3.5);

const CanvasArt = () => (
  <CanvasSvg viewBox="170 168 1196 305" shapeRendering="crispEdges">
    <defs>
      <clipPath id="hc"><path d="M170 168H678L737 303L657 306V311L170 324Z" /></clipPath>
    </defs>
    <rect x="170" y="168" width="1196" height="305" fill="#000" />
    <polygon points="621,168 1123,168 1180,233 657,247" fill="#595959" />
    <polygon points="582,168 621,168 657,247 657,311 643,310" fill="#3f3f3f" />
    <polygon points="657,247 1180,233 1180,327 656,341 643,310 657,311" fill="#424242" />
    <polygon points="1123,168 1150,168 1180,233 1151,234" fill="#8a8a8a" />
    <polygon points="1151,234 1180,233 1180,296" fill="#696969" />
    <polygon points="1150,168 1366,168 1366,228 1180,233" fill="#a9a9a9" />
    <polygon points="1180,233 1366,228 1366,292 1180,296" fill="#808080" />
    <g clipPath="url(#hc)" stroke="#a0948f" strokeWidth="2">
      {hatchRows.map((y, i) => <line key={i} x1="170" y1={y + 8 + (i % 3) * 0.6} x2="760" y2={y - 8.500 + (i % 3) * 0.6} strokeDasharray={i % 2 ? '90 6' : '70 5 120 8'} strokeDashoffset={i * 37} />)}
    </g>
    <rect x="346" y="168" width="125" height="38" fill="#000" fillOpacity=".35" />
    <text x="346" y="205" fontFamily="Liberation Mono" fontSize="56" fill="none" stroke="#c4d0d4" strokeWidth="1.500" shapeRendering="geometricPrecision">@100</text>
    <line x1="170" y1="354" x2="1366" y2="322" stroke="#f00" strokeWidth="1.500" />
    <line x1="643" y1="310" x2="656" y2="341" stroke="#f00" />
    <line x1="582" y1="168" x2="643" y2="310" stroke="#e00" strokeDasharray="4 2" />
    <line x1="170" y1="197" x2="589" y2="188" stroke="#f00" strokeWidth="1.500" strokeDasharray="24 14" />
    <line x1="170" y1="238" x2="607" y2="227" stroke="#f00" strokeWidth="1.500" strokeDasharray="28 14" />
    <line x1="173" y1="185" x2="177" y2="252" stroke="#2a9a2a" strokeDasharray="2 4" />
    <line x1="580" y1="170" x2="573" y2="183" stroke="#2a9a2a" strokeDasharray="2 3" />
    <line x1="573" y1="183" x2="590" y2="193" stroke="#2a9a2a" strokeDasharray="2 3" />
    <line x1="657" y1="247" x2="1180" y2="233" stroke="#fff" strokeWidth="1.500" />
    <line x1="1150" y1="168" x2="1180" y2="233" stroke="#fff" strokeWidth="1.200" />
    <line x1="621" y1="168" x2="657" y2="247" stroke="#fff" strokeWidth="3.500" />
    <line x1="595" y1="168" x2="654" y2="308" stroke="#fff" strokeWidth="1.500" strokeDasharray="4 3" />
    <line x1="170" y1="256" x2="656" y2="245" stroke="#fff" strokeWidth="4.500" strokeDasharray="8 6" />
    <line x1="657" y1="247" x2="657" y2="311" stroke="#fff" strokeWidth="1.500" />
    <line x1="657" y1="311" x2="170" y2="324" stroke="#fff" strokeWidth="2" />
    <line x1="798" y1="168" x2="830" y2="243" stroke="#ff0" strokeWidth="1.600" />
    <line x1="816" y1="243" x2="830" y2="243" stroke="#ff0" strokeWidth="2" />
    <g fill="none" stroke="#999" shapeRendering="geometricPrecision">
      <circle cx="767" cy="320" r="135" />
      <circle cx="767" cy="185" r="8" />
      <circle cx="632" cy="320" r="8" />
      <circle cx="902" cy="320" r="8" />
      <circle cx="767" cy="455" r="8" />
    </g>
    <g shapeRendering="geometricPrecision">
      <circle cx="183" cy="354" r="12" fill="none" stroke="#1c9a1c" strokeDasharray="2 1" />
      <text x="175" y="358" fontFamily="Liberation Sans" fontSize="12" fill="#ddd">A1</text>
      <path d="M225 423V385" stroke="#0a78ff" strokeWidth="4" />
      <path d="M220 390l5-15 5 15z" fill="#0a78ff" />
      <path d="M225 423L262 422" stroke="#f00" strokeWidth="4" />
      <path d="M260 416l14 5-14 5z" fill="#f00" />
      <path d="M211 371h9l-9 9h9" fill="none" stroke="#0a78ff" />
      <path d="M231 410l4 5 5-5M235 415v6" fill="none" stroke="#1c9c1c" />
      <path d="M261 414l8 8M269 414l-8 8" stroke="#f00" />
      <path d="M222 420l3 4 -1 -6" stroke="#1c9c1c" fill="none" />
    </g>
  </CanvasSvg>
);

const cols = ['', '筋号', '直径(mm)', '级别', '图号', '图形', '计算公式', '公式描述', '弯曲调整(mm)', '长度(mm)', '根数', '搭接', '损耗(%)', '单重(kg)', '总重(kg)', '钢筋'];
const HeadOrange = 'linear-gradient(#fbd79d,#f4bf6c)';
const Green = '#ccffd6';

export default function App() {
  return <Page>
    <Global />
    <TitleBar>
      <AppLogo><svg width="13" height="13" viewBox="0 0 16 16"><path d="M8 1v14M1 8h14" stroke="#fff" strokeWidth="2" /><path d="M8 8c-4-3-5 1-3 2M8 8c4 3 5-1 3-2" fill="none" stroke="#fff" /></svg></AppLogo>
      <TitleText>广联达BIM钢筋算量软件 GGJ2013 - [C:\Users\Administrator.PC-20141127NRHM\Desktop\白龙村-2018-02-02-19-24-35</TitleText>
      <WinBtns>
        <WinBtn><svg width="11" height="11"><path d="M0 6h10" stroke="#111" /></svg></WinBtn>
        <WinBtn><svg width="11" height="11"><path d="M.5 2.500h8v8h-8zM2.500 2.500V.5h8v8h-2" fill="none" stroke="#111" /></svg></WinBtn>
        <WinBtn><svg width="11" height="11"><path d="M.5 .5l10 10M10.500 .5l-10 10" stroke="#111" /></svg></WinBtn>
      </WinBtns>
      <Sogou>
        <SogouS>S</SogouS>
        <SogouItem $x={29}>中</SogouItem>
        <SogouItem $x={51}>°,</SogouItem>
        <SogouItem $x={73}><svg width="18" height="18" viewBox="0 0 18 18"><circle cx="9" cy="9" r="7.500" fill="none" stroke="#1a78c2" strokeWidth="1.6" /><circle cx="6.500" cy="7" r="1" fill="#1a78c2" /><circle cx="11.500" cy="7" r="1" fill="#1a78c2" /><path d="M5.500 11c2 2 5 2 7 0" fill="none" stroke="#1a78c2" /></svg></SogouItem>
        <SogouItem $x={95}><svg width="18" height="18" viewBox="0 0 18 18"><rect x="6" y="1" width="6" height="11" rx="3" fill="#1a78c2" /><path d="M4 9c0 5 10 5 10 0M9 14v3M6 17h6" fill="none" stroke="#1a78c2" /></svg></SogouItem>
        <SogouItem $x={117}><svg width="18" height="18" viewBox="0 0 18 18"><rect x="2" y="4" width="14" height="10" rx="1" fill="#1a78c2" /><path d="M4 7h10M4 9.500h10M6 12h6" stroke="#fff" strokeDasharray="1 1" /></svg></SogouItem>
        <SogouItem $x={142}><svg width="18" height="18" viewBox="0 0 18 18"><circle cx="7" cy="5" r="3" fill="#9ab" /><path d="M2 16c0-5 2-7 5-7 2 0 3 1 4 2v5z" fill="#9ab" /><rect x="9" y="10" width="8" height="6" fill="#cdd8e4" stroke="#9ab" /></svg></SogouItem>
        <SogouItem $x={161}><svg width="18" height="18" viewBox="0 0 18 18"><path d="M5 2l4 1 4-1 4 3-2 3-2-1v9H5V7L3 8 1 5z" fill="#1a78c2" /></svg></SogouItem>
        <SogouItem $x={182}><svg width="18" height="18" viewBox="0 0 18 18"><path d="M15 2a4 4 0 0 0-5 5L2 14l2 2 7-8a4 4 0 0 0 5-5l-3 2-1-2z" fill="#1a78c2" /></svg></SogouItem>
      </Sogou>
      <Badge>62</Badge>
    </TitleBar>

    <MenuBar>
      {menu.map(([t, w, pl]) => <MenuItem key={t} $w={w} $pl={pl}>{t}</MenuItem>)}
      <MenuItem $w={87}><svg width="16" height="18" viewBox="0 0 16 18"><path d="M2.500 1.500h8l3 3v12h-11z" fill="#fff" stroke={B} /><path d="M5 5h5M5 8h5" stroke={B} /><path d="M11 10l4 4-4 4-4-4z" fill="#3c9a2c" /></svg>新建变更<Caret /></MenuItem>
      <MenuItem $w={63}><svg width="16" height="18" viewBox="0 0 16 18"><path d="M8 2c5 0 7 4 7 8s-3 6-7 6-7-2-7-6 2-8 7-8z" fill="#2ba4ee" /><circle cx="5.500" cy="8" r="2" fill="#fff" /><circle cx="10.500" cy="8" r="2" fill="#fff" /><path d="M5 12c2 1.500 4 1.500 6 0" stroke="#fff" fill="none" /></svg>广小二</MenuItem>
      <MenuAsk>为什么绘制的后浇带汇..</MenuAsk>
      <MenuItem $w={118}><svg width="17" height="18" viewBox="0 0 17 18"><rect x="0" y="1" width="17" height="16" rx="3" fill="#3f9be0" /><circle cx="8.500" cy="7" r="3" fill="#fff" /><path d="M3 15c0-5 11-5 11 0z" fill="#fff" /></svg>13907298339<Caret /></MenuItem>
      <MenuItem $w={62}>造价豆:0</MenuItem>
      <MenuItem $w={44}><Bell><svg width="14" height="18" viewBox="0 0 14 18"><path d="M7 1c4 0 5 3 5 6s1 5 2 6H0c1-1 2-3 2-6s1-6 5-6z" fill="#2f7fe0" /><circle cx="7" cy="15" r="2" fill="#2f7fe0" /></svg></Bell><Chev>»</Chev></MenuItem>
    </MenuBar>

    <Bar groups={row1} origin={0} h={26} mt={1} />

    <Main>
      <Left>
        <NavHead>模块导航栏<Pin>ǂ</Pin><NavClose>×</NavClose></NavHead>
        <NavBtn>工程设置</NavBtn>
        <NavBtn>绘图输入</NavBtn>
        <TreeBox>
          <Expander>
            <svg width="19" height="19" viewBox="0 0 19 19"><path d="M1 6h9M5.500 1.500v9" stroke="#111" strokeWidth="2" /><path d="M8 13h10M13 8.500v10" stroke="#0a8a7a" strokeWidth="2" /></svg>
            <svg width="17" height="14" viewBox="0 0 17 14"><path d="M1 4h9" stroke="#111" strokeWidth="2" /><path d="M7 10h9" stroke="#0a8a7a" strokeWidth="2" /></svg>
          </Expander>
          <TreeWrap>
            <TreeBody>
              {tree.map(([icon, label, flag]) => flag === 'f'
                ? <TreeLine key={label} $folder><Fold /><Ic n={icon} /><TreeLabel>{label}</TreeLabel></TreeLine>
                : <TreeLine key={label} $last={flag === 'last'}><Ic n={icon} /><TreeLabel $sel={flag === 'sel'}><Mix t={label} /></TreeLabel>{flag === 'tile' && <MiniTile />}</TreeLine>)}
              <TreeLine $folder><Fold /><Ic n="folder" /><MiniTile $ml={52} $w={15} /><MiniTile $ml={4} $w={18} $bg="#ffe98a" $line="#e0b000" /></TreeLine>
            </TreeBody>
            <VScroll><Arrow $r={45} /><VThumb /><Arrow $r={225} /></VScroll>
          </TreeWrap>
          <HScroll $h={17}><Arrow $r={-45} /><HThumb $l={18} $w={102} /><ArrowEnd $r={135} /></HScroll>
        </TreeBox>
        <NavBtn>单构件输入</NavBtn>
        <NavBtn>报表预览</NavBtn>
      </Left>
      <Right>
        <Bar groups={row2} origin={170} h={26} />
        <Bar groups={row3} origin={170} h={26} mt={1} />
        <Bar groups={row4} origin={170} h={26} mt={3} />
        <Canvas>
          <CanvasArt />
          <Ctl>
            <CtlTitle>钢筋显示控制面板</CtlTitle>
            <CtlList>
              {['底筋', '显示其它图元', '显示详细公式'].map(t => <CtlRow key={t}><CtlCheck>✓</CtlCheck>{t}</CtlRow>)}
            </CtlList>
          </Ctl>
        </Canvas>
        <Bar groups={row5} origin={170} h={26} mt={1} />
        <Lower>
          <Splitter><SplitIcon>×</SplitIcon><Dots /></Splitter>
          <TablePane>
            <Bar groups={rowT} origin={183} h={23} mt={8} />
            <Frame>
              <Grid>
                {cols.map((c, i) => <Cell key={i} $head $bg={i === 2 ? HeadOrange : undefined} $color={i === 2 ? '#5a0a6a' : undefined}><Mix t={c} /></Cell>)}
                <Cell $head $bg={HeadOrange} $color="#6a0a6a"><Lat>1*</Lat></Cell>
                <Cell $bg={Green} $wrap={13} $mark><span>筏板受力筋.<br />1</span></Cell>
                <Cell $bg="#aeeacc"><Lat>14</Lat></Cell>
                <Cell $bg={Green} $center><strong>Ф</strong></Cell>
                <Cell $bg={Green}><Lat>1</Lat></Cell>
                <Cell $bg={Green} $center><Shape>3798</Shape></Cell>
                <Cell $bg={Green}><Lat>3300+37*d-20</Lat></Cell>
                <Cell $bg={Green} $wrap={12}>净长+钢筋锚入支座长度-保护层</Cell>
                <Cell $bg={Green}><Lat>(0)</Lat></Cell>
                <Cell $bg={Green}><Lat>3798</Lat></Cell>
                <Cell $bg={Green}><Lat>136</Lat></Cell>
                <Cell $bg={Green}><Lat>0</Lat></Cell>
                <Cell $bg={Green}><Lat>0</Lat></Cell>
                <Cell $bg={Green}><Lat>4.596</Lat></Cell>
                <Cell $bg={Green}><Lat>624.999</Lat></Cell>
                <Cell $bg={Green}>直筋</Cell>
                <Cell $center $bg="#f4f4f4"><Lat>2</Lat></Cell>
                <Cell $mark />
                {Array.from({ length: 14 }, (_, i) => <Cell key={i} />)}
              </Grid>
              <HScroll $h={16}><Arrow $r={-45} /><HThumb $l={18} $w={760} /></HScroll>
            </Frame>
          </TablePane>
        </Lower>
      </Right>
    </Main>

    <Status>
      <StatusCell $w={148}><Mix t="X=502906 Y=11410" /></StatusCell>
      <StatusCell $w={78}><Mix t="层高:2.15m" /></StatusCell>
      <StatusCell $w={97}><Mix t="底标高:-2.2m" /></StatusCell>
      <StatusCell $w={47}><Mix t="1(28)" /></StatusCell>
      <StatusCell $w={916} />
      <StatusCell $w={65}><Mix t="201.8 FPS" /></StatusCell>
    </Status>

    <Task>
      <Start><svg width="17" height="17" viewBox="0 0 17 17"><path d="M0 2.500l7-1v6.500H0zM8 1.300l9-1.300v8H8zM0 9h7v6.500l-7-1zM8 9h9v8l-9-1.300z" fill="#fff" /></svg></Start>
      <Search><Ring /><span>在这里输入你要搜索的内容</span><MicWrap><svg width="12" height="20" viewBox="0 0 12 20"><rect x="3" y="1" width="6" height="11" rx="3" fill="none" stroke="#999" /><path d="M1 9c0 6 10 6 10 0M6 15v3M3 18h6" fill="none" stroke="#999" /></svg></MicWrap></Search>
      <Slot2 $w={49}><TB><path d="M7 5h10v14H7zM4 7H2v10h2M20 7h2v10h-2" fill="none" stroke="#fff" strokeWidth="1.3" /></TB></Slot2>
      <Slot2 $w={51}><TB>{[0, 90, 180, 270].map(r => <path key={r} d={petal} fill="#e2e2e2" transform={`rotate(${r} 12 12)`} />)}</TB></Slot2>
      <Slot2 $w={51}><TB><path d={letterE} fill="none" stroke="#e8e8e8" strokeWidth="3.200" /><path d="M3 21C6 10 14 3 21 2" fill="none" stroke="#bbb" strokeWidth="1" /></TB></Slot2>
      <Slot2 $w={50}><TB><path d="M19 6A9 9 0 1 0 20 14L13 14M16 8A5 5 0 1 0 16 16" fill="none" stroke="#bbb" strokeWidth="1.500" /></TB></Slot2>
      <Slot2 $w={20}><SepV /></Slot2>
      <Slot2 $w={50}><TB><path d={letterE} fill="none" stroke="#1b86e0" strokeWidth="4.500" /></TB></Slot2>
      <Slot2 $w={40}><TB><path d={letterE} fill="none" stroke="#3aa0e8" strokeWidth="3.500" /><ellipse cx="12" cy="12" rx="12" ry="5" fill="none" stroke="#f0c020" strokeWidth="1.500" transform="rotate(-30 12 12)" /></TB></Slot2>
      <Slot2 $w={44} $run><TB><path d="M2 4h8l2 2h10v16H2z" fill="#f5d67c" /><path d="M8 14h8v8H8z" fill="#3a9be0" /></TB></Slot2>
      <Slot2 $w={44} $run><TB><path d="M20 5A10 10 0 1 0 21 15L15 13c1 4-4 5-6 3-3-4 2-9 9-6z" fill="#1f96ea" /></TB></Slot2>
      <Slot2 $w={44} $run><TB><rect x="1" y="1" width="22" height="22" rx="1" fill="#f0a53c" /><rect x="5" y="5" width="12" height="15" fill="#fbf3d9" /><path d="M7 8h8M7 11h8M7 14h6" stroke="#a86" /><path d="M21 1l-9 16-2 2 1-3L19 1z" fill="#c8602a" /></TB></Slot2>
      <Slot2 $w={42} $on $run><TB><rect x="0" y="0" width="24" height="24" rx="4" fill="#1290ea" /><path d="M12 3v18M3 12h18" stroke="#fff" strokeWidth="2.500" /><path d="M12 12c-6-4-8 1-5 3M12 12c6 4 8-1 5-3" fill="none" stroke="#fff" strokeWidth="1.500" /></TB></Slot2>
      <Slot2 $w={44} $run><TB><circle cx="12" cy="13" r="10" fill="#7fc241" stroke="#d8f0c0" /><circle cx="12" cy="13" r="6" fill="#fff" /><path d="M7 13h10" stroke="#6ab030" strokeWidth="2" /><path d="M14 3c3-2 6-2 8-1" fill="none" stroke="#4a9a28" strokeWidth="1.500" /></TB></Slot2>
      <Slot2 $w={28}><SepV /></Slot2>
      <Slot2 $w={28}><Tray>链接</Tray></Slot2>
      <Slot2 $w={78}><Tray>40%<br />CPU使用</Tray></Slot2>
      <Slot2 $w={20}><TB s={14}><path d="M4 16l8-8 8 8" fill="none" stroke="#fff" strokeWidth="2" /></TB></Slot2>
      <Slot2 $w={28}><TB s={18}><rect x="4" y="8" width="17" height="12" fill="#ddd" /><rect x="6" y="10" width="10" height="8" fill="#111" /><path d="M5 2v6M10 2v6M2 8h12" stroke="#ddd" strokeWidth="2" /></TB></Slot2>
      <Slot2 $w={24}><TB s={18}><path d="M3 20a18 18 0 0 1 18-17M7 20A13 13 0 0 1 20 8M11 20a8 8 0 0 1 8-7" fill="none" stroke="#ddd" strokeWidth="1.500" strokeDasharray="2 1" /><circle cx="17" cy="19" r="2" fill="#ddd" /></TB></Slot2>
      <Slot2 $w={18}><TB s={18}><path d="M3 9h4l6-5v16l-6-5H3zM16 8c2 2 2 6 0 8" fill="none" stroke="#ddd" strokeWidth="1.500" /></TB></Slot2>
      <Slot2 $w={42}><svg width="24" height="14" viewBox="0 0 24 14"><rect x=".5" y=".5" width="23" height="13" fill="none" stroke="#ddd" /><path d="M3 4h18M3 7h18" stroke="#ddd" strokeDasharray="1.500 1" /><path d="M6 10h12" stroke="#ddd" /></svg></Slot2>
      <Slot2 $w={12}><Tray $s={13}>中</Tray></Slot2>
      <Slot2 $w={46}><svg width="17" height="18" viewBox="0 0 17 18"><rect x="1" y="1" width="15" height="16" rx="3" fill="#e8551e" transform="rotate(-8 8 9)" /><path d="M11.500 5.500C9 4 5.500 5 6 7c.5 2 5.500 1.500 5.500 4s-4 3-6 1.500" fill="none" stroke="#fff" strokeWidth="1.800" /></svg></Slot2>
      <Slot2 $w={61}><Tray>14:28<br />2018/5/7</Tray></Slot2>
      <Slot2 $w={60}><svg width="16" height="16" viewBox="0 0 16 16"><path d="M0 0h16v12H6l-3 3v-3H0z" fill="#eee" /><path d="M3 3h10M3 6h10M3 9h7" stroke="#333" /></svg><NotifBadge>1</NotifBadge></Slot2>
    </Task>
  </Page>;
}
